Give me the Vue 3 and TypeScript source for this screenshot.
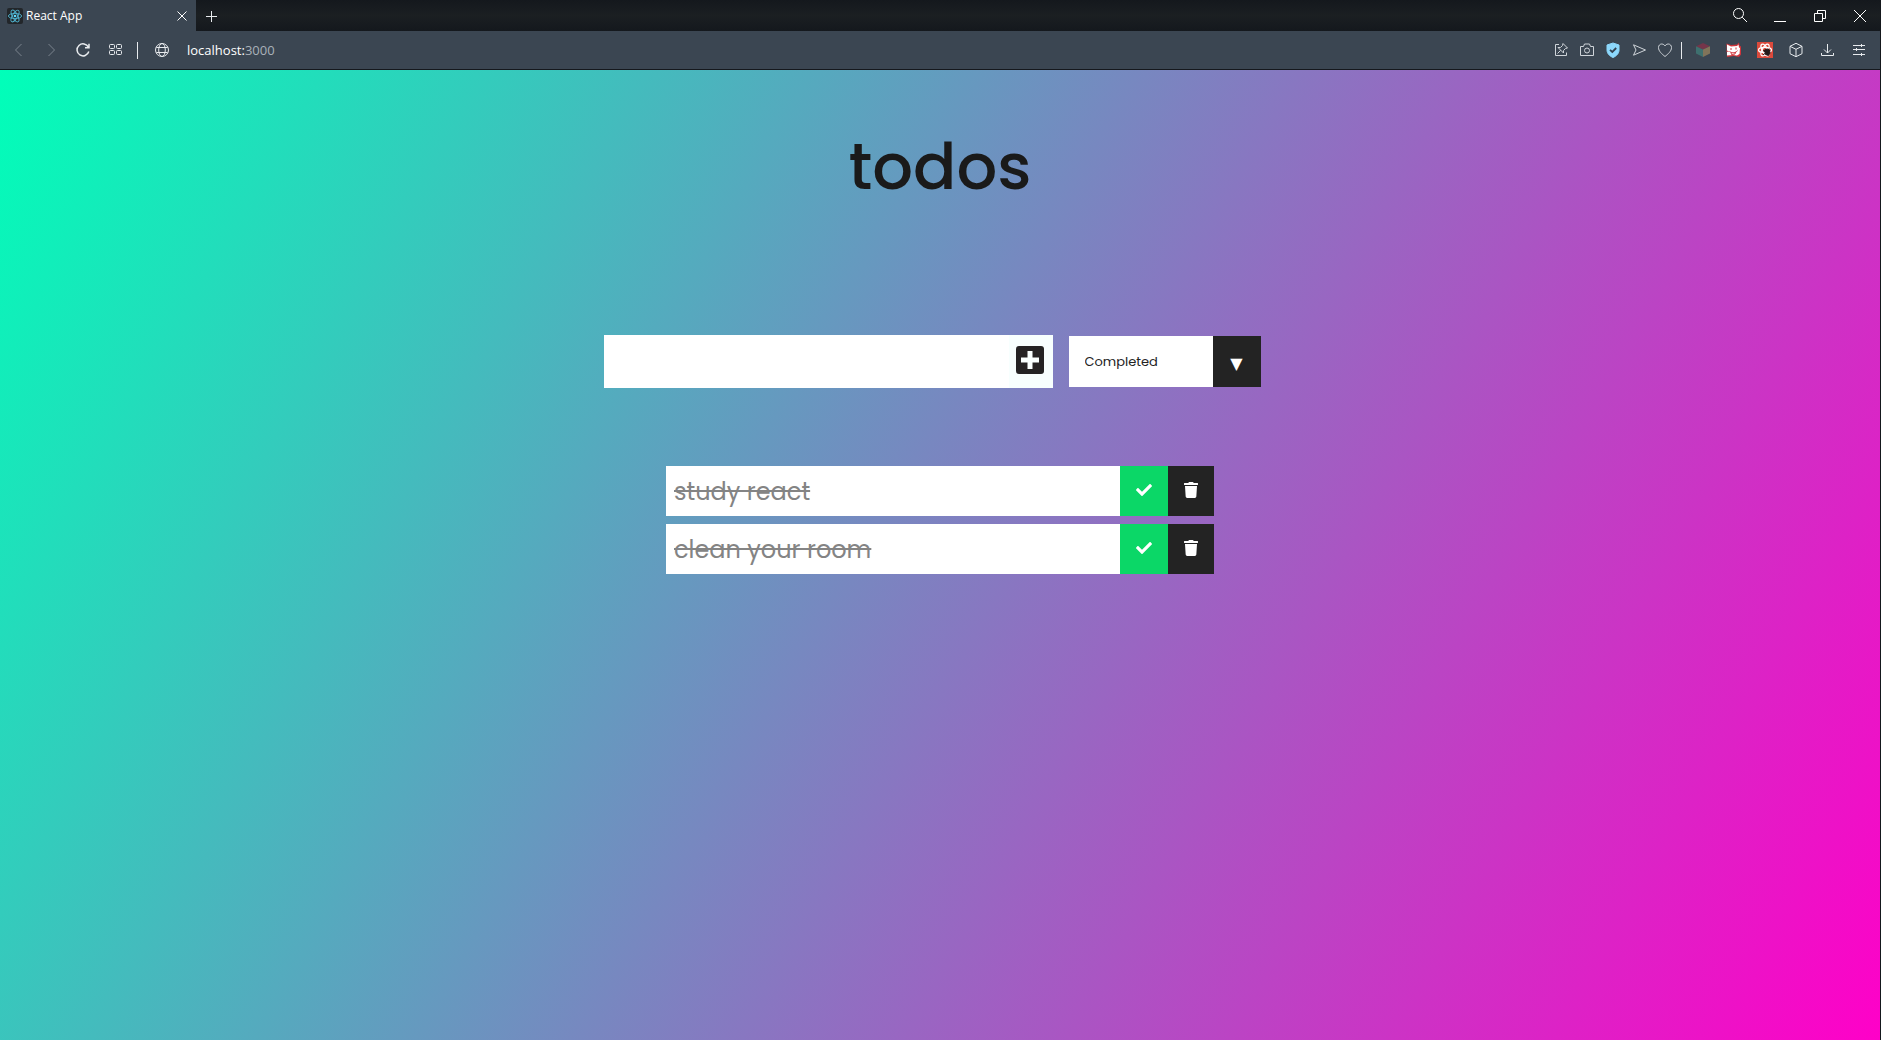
<script setup lang="ts">
import { computed, ref } from 'vue'

interface Todo {
  id: number
  text: string
  completed: boolean
}

type Filter = 'all' | 'completed' | 'uncompleted'

const todos = ref<Todo[]>([
  { id: 1, text: 'study react', completed: true },
  { id: 2, text: 'clean your room', completed: true },
])
const draft = ref('')
const filter = ref<Filter>('completed')

const visibleTodos = computed(() =>
  todos.value.filter((todo) =>
    filter.value === 'all' ? true : todo.completed === (filter.value === 'completed'),
  ),
)

function addTodo() {
  const text = draft.value.trim()
  if (!text) return
  todos.value.push({ id: Date.now(), text, completed: false })
  draft.value = ''
}

function removeTodo(id: number) {
  todos.value = todos.value.filter((todo) => todo.id !== id)
}
</script>

<template>
  <div class="window">
    <header class="chrome">
      <div class="tabs">
        <div class="tab">
          <svg class="favicon" viewBox="0 0 16 16" aria-hidden="true">
            <rect width="16" height="16" rx="2" fill="#22262a" />
            <g fill="none" stroke="#4fb3cf" stroke-width="0.9">
              <ellipse cx="8" cy="8" rx="6.6" ry="2.6" />
              <ellipse cx="8" cy="8" rx="6.6" ry="2.6" transform="rotate(60 8 8)" />
              <ellipse cx="8" cy="8" rx="6.6" ry="2.6" transform="rotate(120 8 8)" />
            </g>
            <circle cx="8" cy="8" r="1.3" fill="#61dafb" />
          </svg>
          <span class="tab-title">React App</span>
          <button class="icon-btn" type="button" aria-label="Close tab">
            <svg viewBox="0 0 16 16"><path d="M3.5 3.5l9 9M12.5 3.5l-9 9" /></svg>
          </button>
        </div>
        <button class="icon-btn new-tab" type="button" aria-label="New tab">
          <svg viewBox="0 0 16 16"><path d="M8.5 3v11M3 8.5h11" /></svg>
        </button>
        <div class="controls">
          <button class="control" type="button" aria-label="Search tabs">
            <svg viewBox="0 0 16 16"><circle cx="6.5" cy="5.5" r="5" /><path d="M10.2 9.200l4.800 4.800" /></svg>
          </button>
          <button class="control" type="button" aria-label="Minimize">
            <svg viewBox="0 0 16 16"><path d="M2 13.5h12" /></svg>
          </button>
          <button class="control" type="button" aria-label="Restore">
            <svg viewBox="0 0 16 16"><path d="M2.5 5.5h8v8h-8zM5.5 5.500v-3h8v8h-3" /></svg>
          </button>
          <button class="control" type="button" aria-label="Close">
            <svg viewBox="0 0 16 16"><path d="M2 2l12 12M14 2l-12 12" /></svg>
          </button>
        </div>
      </div>

      <nav class="toolbar" aria-label="Browser toolbar">
        <div class="nav-group">
          <button class="icon-btn dim" type="button" aria-label="Back">
            <svg viewBox="0 0 16 16"><path d="M10.5 2l-6 6 6 6" /></svg>
          </button>
          <button class="icon-btn dim" type="button" aria-label="Forward">
            <svg viewBox="0 0 16 16"><path d="M5.5 2l6 6-6 6" /></svg>
          </button>
          <button class="icon-btn bold" type="button" aria-label="Reload">
            <svg viewBox="0 0 16 16"><path d="M13.800 9.500a6 6 0 1 1-.4-4.300M14 1.800v4h-4" /></svg>
          </button>
          <button class="icon-btn" type="button" aria-label="Speed dial">
            <svg viewBox="0 0 16 16">
              <rect x="2.5" y="2.5" width="5" height="4" rx="1" /><rect x="9.5" y="2.5" width="5" height="4" rx="1" />
              <rect x="2.5" y="8.5" width="5" height="4" rx="1" /><rect x="9.5" y="8.5" width="5" height="4" rx="1" />
            </svg>
          </button>
        </div>
        <span class="divider"></span>
        <svg class="line-icon globe" viewBox="0 0 16 16" aria-hidden="true">
          <circle cx="8" cy="8" r="6.5" /><ellipse cx="8" cy="8" rx="3.3" ry="6.5" />
          <path d="M2.300 5.500h11.400M2.300 10.500h11.400" />
        </svg>
        <span class="address">localhost:<span class="port">3000</span></span>

        <div class="page-tools">
          <button class="icon-btn soft" type="button" aria-label="Pin page">
            <svg viewBox="0 0 16 16"><path d="M6 2.500H2.500v11h11V10.500M10 1.500l4.500 4.500-2 .5-2 2 0 2.500-5.500-5.500 2.500 0 2-2zM7.700 8.300L4.500 11.500" /></svg>
          </button>
          <button class="icon-btn soft" type="button" aria-label="Snapshot">
            <svg viewBox="0 0 16 16"><path d="M1.500 4.500h3l1-2.500h5l1 2.500h3v9h-13z" /><circle cx="8" cy="8.500" r="2.500" /></svg>
          </button>
          <button class="icon-btn" type="button" aria-label="Ad blocker">
            <svg viewBox="0 0 16 16">
              <path d="M8 1l6 2v5c0 3.500-2.500 6-6 7.500C4.500 14 2 11.500 2 8V3z" fill="#8cd8fc" stroke="#8cd8fc" />
              <path d="M5 7.800l2.300 2.200L11.200 6" stroke="#334250" stroke-width="1.800" />
            </svg>
          </button>
          <button class="icon-btn soft" type="button" aria-label="Send">
            <svg viewBox="0 0 16 16"><path d="M2.500 2.800L14.500 8l-12 5.200L5 8z" /></svg>
          </button>
          <button class="icon-btn soft" type="button" aria-label="Add to favourites">
            <svg viewBox="0 0 16 16"><path d="M8 14.500C5 12 1.500 9.300 1.500 5.500c0-2 1.400-3.500 3.200-3.500C6.300 2 7.500 3 8 4c.5-1 1.700-2 3.300-2 1.800 0 3.200 1.500 3.200 3.500C14.500 9.300 11 12 8 14.500z" /></svg>
          </button>
        </div>
        <span class="divider tools-divider"></span>
        <div class="extensions">
          <button class="icon-btn" type="button" aria-label="Cube extension">
            <svg class="filled" viewBox="0 0 16 16">
              <path d="M8 1l7 3.300L8 7.500 1 4.300z" fill="#75354a" /><path d="M1 4.300l7 3.200V15l-7-3.500z" fill="#3e706f" />
              <path d="M15 4.300L8 7.500V15l7-3.500z" fill="#80745a" />
            </svg>
          </button>
          <button class="icon-btn" type="button" aria-label="Cat extension">
            <svg class="filled" viewBox="0 0 16 16">
              <path d="M.5 1.500L5 3l6-.5L13 .5l.5 3 1.500 1v8l-2 2.500-5-1-7 1z" fill="#d0343a" />
              <path d="M1 2.500l4 2 6-.5 1.500-1.500.5 3 1 .5-.5 6-2.500 1.500-4-.500-6 .5z" fill="#fff" />
              <path d="M5 6v2M10 5.500v2M3.500 9.500c3 2 6 1.500 8-.8M5 10.500l.5 2 3.500-.5.5-2M.5 9l2 .5" fill="none" stroke="#d0343a" />
            </svg>
          </button>
          <button class="icon-btn" type="button" aria-label="React developer tools">
            <svg class="filled" viewBox="0 0 16 16">
              <rect width="16" height="16" fill="#dc4a3c" />
              <g fill="none" stroke="#fff" stroke-width="1.200">
                <ellipse cx="8" cy="8" rx="6.500" ry="2.700" /><ellipse cx="8" cy="8" rx="6.500" ry="2.700" transform="rotate(60 8 8)" />
                <ellipse cx="8" cy="8" rx="6.500" ry="2.700" transform="rotate(120 8 8)" />
              </g>
              <path d="M7.500 8l3-1 2 1 .5 3-1.500 2.500-3-1zM6 8.500l2 1M6 13l2.500-2M12 6.500l-1 2" fill="#241a1a" stroke="#241a1a" />
            </svg>
          </button>
          <button class="icon-btn" type="button" aria-label="Extensions">
            <svg viewBox="0 0 16 16"><path d="M8 1.300l6 3v7.400l-6 3-6-3V4.300zM2 4.300l6 3 6-3M8 7.300v7.400" /></svg>
          </button>
          <button class="icon-btn" type="button" aria-label="Downloads">
            <svg viewBox="0 0 16 16"><path d="M8.500 2v9M5 7.500l3.500 3.500L12 7.500M2.500 11v2.500h12V11" /></svg>
          </button>
          <button class="icon-btn" type="button" aria-label="Easy setup">
            <svg viewBox="0 0 16 16"><path d="M3 3.500h12M3 7.500h12M3 12.500h12M11.500 2v3M6.500 6v3M11.500 11v3" /></svg>
          </button>
        </div>
      </nav>
    </header>

    <main class="app">
      <div class="heading"><h1>todos</h1></div>

      <form class="todo-form" @submit.prevent="addTodo">
        <div class="entry">
          <input v-model="draft" class="todo-input" type="text" aria-label="New todo" />
          <button class="add-btn" type="submit" aria-label="Add todo">
            <svg viewBox="0 0 28 28">
              <rect width="28" height="28" rx="3" fill="#232323" />
              <path d="M11.500 5h5v6.500H23v5h-6.500V23h-5v-6.500H5v-5h6.500z" fill="#f7fffe" />
            </svg>
          </button>
        </div>
        <div class="select">
          <select v-model="filter" aria-label="Filter todos">
            <option value="all">All</option>
            <option value="completed">Completed</option>
            <option value="uncompleted">Uncompleted</option>
          </select>
        </div>
      </form>

      <ul class="todo-list">
        <li v-for="todo in visibleTodos" :key="todo.id" class="todo">
          <span class="todo-text" :class="{ completed: todo.completed }">{{ todo.text }}</span>
          <button class="check-btn" type="button" aria-label="Toggle completed" @click="todo.completed = !todo.completed">
            <svg viewBox="0 0 512 512">
              <path fill="#fff" d="M173.898 439.404l-166.400-166.400c-9.997-9.997-9.997-26.206 0-36.204l36.203-36.204c9.997-9.998 26.207-9.998 36.204 0L192 312.690 432.095 72.596c9.997-9.997 26.207-9.997 36.204 0l36.203 36.204c9.997 9.997 9.997 26.206 0 36.204l-294.400 294.401c-9.998 9.997-26.207 9.997-36.204-.001z" />
            </svg>
          </button>
          <button class="trash-btn" type="button" aria-label="Delete todo" @click="removeTodo(todo.id)">
            <svg viewBox="0 0 448 512">
              <path fill="#fff" d="M432 32H312l-9.400-18.700A24 24 0 0 0 281.100 0H166.800a23.720 23.720 0 0 0-21.400 13.300L136 32H16A16 16 0 0 0 0 48v32a16 16 0 0 0 16 16h416a16 16 0 0 0 16-16V48a16 16 0 0 0-16-16zM53.200 467a48 48 0 0 0 47.900 45h245.800a48 48 0 0 0 47.900-45L416 128H32z" />
            </svg>
          </button>
        </li>
      </ul>
    </main>
  </div>
</template>

<style>
body {
  margin: 0;
}
</style>

<style scoped>
* {
  box-sizing: border-box;
}

.window {
  display: flex;
  flex-direction: column;
  min-height: 100vh;
  border-right: 1px solid #15181d;
  font-family: Poppins, Inter, sans-serif;
}

button {
  padding: 0;
  border: 0;
  background: none;
  cursor: pointer;
}

.chrome {
  border-bottom: 1px solid #15181d;
  color: #fff;
  font-family: 'Segoe UI', 'Open Sans', sans-serif;
}

.tabs {
  display: flex;
  height: 31px;
  background: linear-gradient(#14181d, #1b1f22 50%, #14181d);
}

.tab {
  display: flex;
  align-items: center;
  gap: 3px;
  width: 196px;
  padding: 0 6px 0 7px;
  background: #3b4652;
}

.favicon {
  width: 16px;
  height: 16px;
}

.tab-title {
  flex: 1;
  font-size: 12px;
  line-height: 16px;
}

.icon-btn {
  display: flex;
  width: 16px;
  height: 16px;
}

.icon-btn svg,
.control svg,
.line-icon {
  width: 16px;
  height: 16px;
  fill: none;
  stroke: #e8ebee;
  stroke-width: 1;
}

.control svg,
.tab .icon-btn svg {
  stroke: #fff;
}

.icon-btn.dim svg {
  stroke: #7b848e;
}

.icon-btn.soft svg {
  stroke: #cfd4d9;
}

.icon-btn.bold svg {
  stroke-width: 1.5;
}

.icon-btn svg.filled {
  stroke: none;
}

.new-tab {
  align-self: center;
  margin-left: 7px;
}

.controls {
  display: flex;
  margin-left: auto;
}

.control {
  display: flex;
  align-items: center;
  justify-content: center;
  width: 40px;
}

.toolbar {
  display: flex;
  align-items: center;
  height: 38px;
  padding: 0 14px 0 11px;
  background: #3b4652;
}

.nav-group {
  display: flex;
  gap: 16px;
}

.divider {
  width: 1px;
  height: 17px;
  margin: 0 16px 0 14px;
  background: #e8ebee;
}

.tools-divider {
  margin: 0 13px 0 8px;
}

.globe {
  margin-right: 17px;
}

.address {
  font-size: 13px;
  line-height: 20px;
}

.port {
  color: #a9b1b9;
}

.page-tools {
  display: flex;
  gap: 10px;
  margin-left: auto;
}

.extensions {
  display: flex;
  gap: 15px;
}

.app {
  flex: 1;
  background: linear-gradient(120deg, #00ffb9, #ff00c8);
}

.heading,
.todo-form {
  display: flex;
  align-items: center;
  justify-content: center;
  min-height: 194px;
}

h1 {
  margin: 0;
  color: #1a1a1a;
  font-size: 64px;
  font-weight: 500;
  line-height: 96px;
}

.entry {
  display: flex;
  height: 53px;
}

.todo-input {
  width: 405px;
  padding: 8px;
  border: 0;
  outline: 0;
  background: #fff;
  font-family: inherit;
  font-size: 24px;
}

.add-btn {
  display: flex;
  align-items: center;
  justify-content: center;
  width: 44px;
  padding: 0 2px 3px 0;
  background: #f7fffe;
}

.add-btn svg {
  width: 28px;
  height: 28px;
}

.select {
  display: flex;
  position: relative;
  width: 192px;
  height: 51px;
  margin: 0 16px;
}

.select::after {
  content: '\25BC';
  position: absolute;
  inset: 0 0 0 auto;
  width: 48px;
  background: #232323;
  color: #fff;
  font-family: 'DejaVu Sans', sans-serif;
  font-size: 16px;
  line-height: 56px;
  text-align: center;
  pointer-events: none;
}

select {
  width: 100%;
  padding: 0 16px;
  border: 0;
  border-radius: 0;
  outline: 0;
  appearance: none;
  background: #fff;
  color: #232323;
  font-family: inherit;
  font-size: 13px;
}

.todo-list {
  display: flex;
  flex-direction: column;
  gap: 8px;
  width: 548px;
  margin: 8px auto;
  padding: 0;
  list-style: none;
}

.todo {
  display: flex;
  height: 50px;
  background: #fff;
}

.todo-text {
  flex: 1;
  padding: 0 8px;
  color: #232323;
  font-size: 24px;
  line-height: 52px;
}

.todo-text.completed {
  color: #848484;
  text-decoration: line-through;
}

.check-btn,
.trash-btn {
  display: flex;
  align-items: center;
  justify-content: center;
  width: 48px;
  padding-bottom: 2px;
  background: #0bd767;
}

.trash-btn {
  width: 46px;
  background: #232323;
}

.check-btn svg,
.trash-btn svg {
  width: 16px;
  height: 16px;
}
</style>
